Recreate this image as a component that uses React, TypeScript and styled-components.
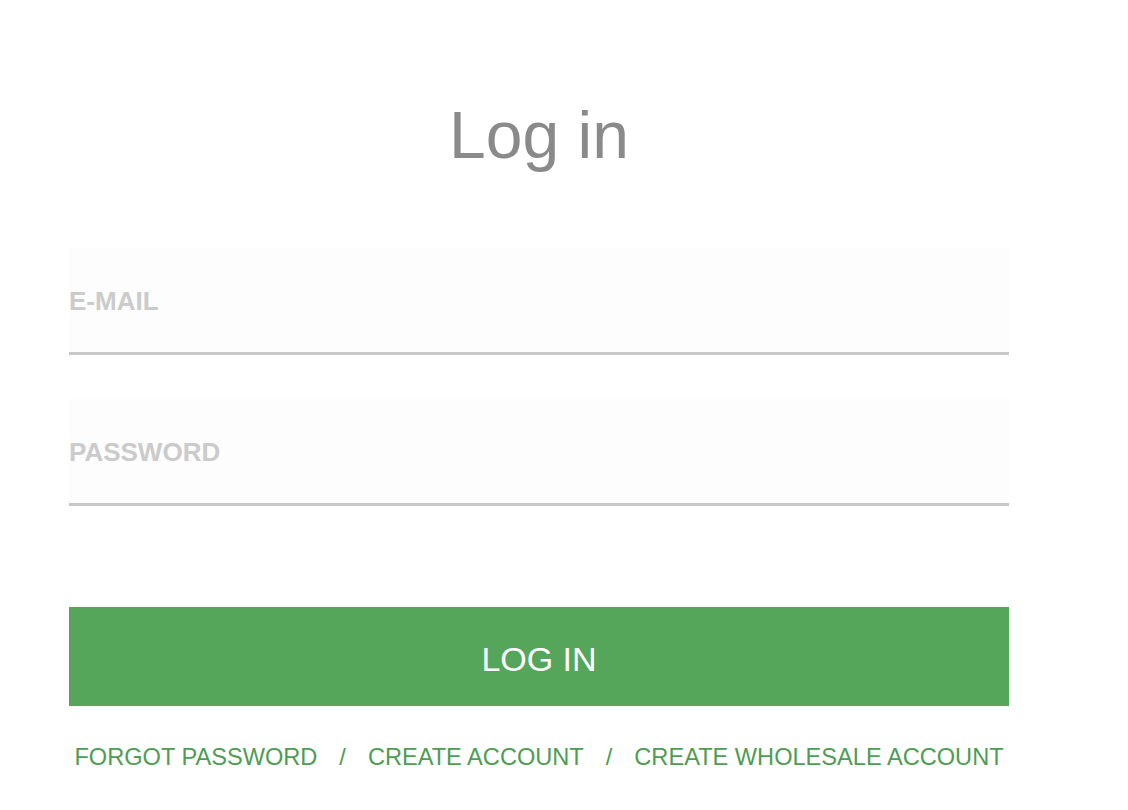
import React from "react";
import styled, { createGlobalStyle } from "styled-components";

const GlobalStyle = createGlobalStyle`
    body {
        margin: 0;
        background: #ffffff;
        font-family: "Liberation Sans", Arial, sans-serif;
    }
`;

const Page = styled.main`
    width: 940px;
    padding: 102px 0 0 69px;
`;

const Title = styled.h1`
    margin: 0;
    font-size: 66px;
    line-height: 66px;
    font-weight: 400;
    color: #8a8a8a;
    text-align: center;
`;

const Form = styled.form`
    display: flex;
    flex-direction: column;
    margin-top: 80px;
`;

const Field = styled.input<{ gap?: number }>`
    display: block;
    box-sizing: border-box;
    width: 100%;
    height: 107px;
    margin: ${props => props.gap ?? 0}px 0 0;
    padding: 2px 0 0 0;
    border: none;
    border-bottom: 3px solid #c8c8c8;
    border-radius: 0;
    background: #fdfdfd;
    font-family: inherit;
    font-size: 26px;
    font-weight: 700;
    color: #555;
    outline: none;
    &::placeholder {
        color: #cbcbcb;
        opacity: 1;
    }
`;

const SubmitBtn = styled.button`
    display: flex;
    align-items: center;
    justify-content: center;
    width: 100%;
    height: 99px;
    margin-top: 101px;
    padding: 6px 0 0;
    border: none;
    background-color: #55a65b;
    color: #ffffff;
    font-family: inherit;
    font-size: 34px;
    cursor: pointer;
`;

const Links = styled.nav`
    display: flex;
    justify-content: center;
    align-items: center;
    gap: 22px;
    margin-top: 40px;
    font-size: 23.6px;
    line-height: 23px;
`;

const LinkItem = styled.a`
    color: #4d9d53;
    text-decoration: none;
    cursor: pointer;
`;

const Slash = styled.span`
    color: #4d9d53;
`;

function App() {
    const links = ["FORGOT PASSWORD", "CREATE ACCOUNT", "CREATE WHOLESALE ACCOUNT"];

    return (
        <>
            <GlobalStyle />
            <Page>
                <Title>Log in</Title>
                <Form onSubmit={e => e.preventDefault()}>
                    <Field type="email" placeholder="E-MAIL" />
                    <Field type="password" placeholder="PASSWORD" gap={44} />
                    <SubmitBtn type="submit">LOG IN</SubmitBtn>
                </Form>
                <Links>
                    {links.map((label, i) => (
                        <React.Fragment key={label}>
                            {i > 0 && <Slash>/</Slash>}
                            <LinkItem>{label}</LinkItem>
                        </React.Fragment>
                    ))}
                </Links>
            </Page>
        </>
    );
}

export default App;
